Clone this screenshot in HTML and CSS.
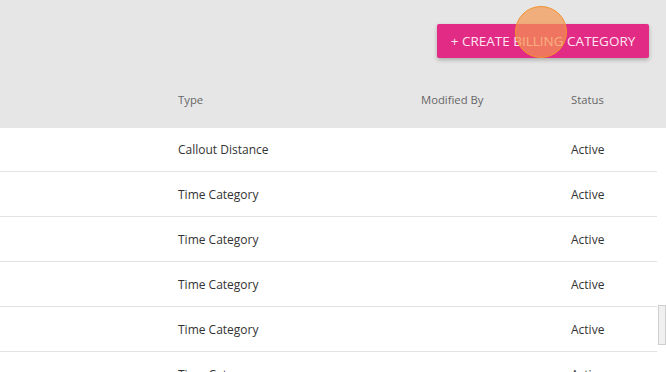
FILE: index.html
```html
<!DOCTYPE html>
<html lang="en">
<head>
    <meta charset="UTF-8">
    <title>Billing Categories</title>
    <link rel="stylesheet" href="styles.css">
</head>
<body>
    <div class="top">
        <div class="toolbar">
            <button class="create">+ CREATE BILLING CATEGORY</button>
            <span class="click"></span>
        </div>
        <div class="row head">
            <div class="c-type">Type</div>
            <div class="c-mod">Modified By</div>
            <div class="c-status">Status</div>
        </div>
    </div>
    <div class="rows">
        <div class="row"><div class="c-type">Callout Distance</div><div class="c-mod"></div><div class="c-status">Active</div></div>
        <div class="row"><div class="c-type">Time Category</div><div class="c-mod"></div><div class="c-status">Active</div></div>
        <div class="row"><div class="c-type">Time Category</div><div class="c-mod"></div><div class="c-status">Active</div></div>
        <div class="row"><div class="c-type">Time Category</div><div class="c-mod"></div><div class="c-status">Active</div></div>
        <div class="row"><div class="c-type">Time Category</div><div class="c-mod"></div><div class="c-status">Active</div></div>
        <div class="row"><div class="c-type">Time Category</div><div class="c-mod"></div><div class="c-status">Active</div></div>
    </div>
    <div class="scroll"></div>
</body>
</html>
```

FILE: styles.css
```css
body {
    margin: 0;
    font-family: "Open Sans", Arial, sans-serif;
    font-size: 12px;
    color: #333;
    background: #fff;
    height: 372px;
    overflow: hidden;
    position: relative;
}
.top {
    background: #e6e6e6;
    height: 128px;
}
.toolbar {
    display: flex;
    justify-content: flex-end;
    padding: 24px 17px 0 0;
    height: 34px;
    position: relative;
}
.create {
    height: 34px;
    width: 212px;
    border: none;
    border-radius: 2px;
    background: #e22b85;
    color: #fde6f1;
    font-family: "Open Sans", Arial, sans-serif;
    font-size: 13.5px;
    padding: 0;
    box-shadow: 0 2px 4px rgba(0, 0, 0, 0.25);
}
.click {
    position: absolute;
    left: 515px;
    top: 6px;
    width: 50px;
    height: 50px;
    border-radius: 50%;
    border: 1px solid #f0922e;
    background: rgba(245, 150, 80, 0.7);
}
.row {
    display: flex;
    height: 44px;
    align-items: center;
    padding-left: 178px;
    margin-right: 9px;
    border-top: 1px solid #e2e2e2;
}
.rows .row:first-child {
    border-top: none;
    height: 43px;
}
.row.head {
    border-top: none;
    height: 77px;
    margin-top: 3px;
    color: #666;
    font-size: 11.3px;
}
.c-type { width: 243px; }
.c-mod { width: 150px; }
.c-status { width: 80px; }
.scroll {
    position: absolute;
    right: 0;
    top: 305px;
    width: 8px;
    height: 40px;
    background: #f0f0f0;
    border: 1px solid #cfcfcf;
    box-sizing: border-box;
}
```
